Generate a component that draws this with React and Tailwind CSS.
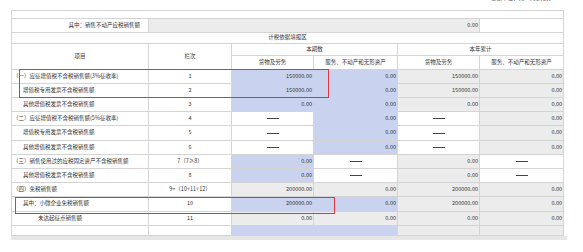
import React from "react";

const B = "bg-[#c9d3ef]";
const G = "bg-[#ececec]";
const W = "bg-white";

const rows = [
  { label: "（一）应征增值税不含税销售额(3%征收率)", indent: 0, lc: "1", h: 14, cells: [[B, "150000.00"], [B, "0.00"], [G, "150000.00"], [G, "0.00"]] },
  { label: "增值税专用发票不含税销售额", indent: 1, lc: "2", h: 14, cells: [[B, "150000.00"], [B, "0.00"], [G, "150000.00"], [G, "0.00"]] },
  { label: "其他增值税发票不含税销售额", indent: 1, lc: "3", h: 14, cells: [[B, "0.00"], [B, "0.00"], [G, "0.00"], [G, "0.00"]] },
  { label: "（二）应征增值税不含税销售额(5%征收率)", indent: 0, lc: "4", h: 14, cells: [[W, "-"], [B, "0.00"], [W, "-"], [G, "0.00"]] },
  { label: "增值税专用发票不含税销售额", indent: 1, lc: "5", h: 15, cells: [[W, "-"], [B, "0.00"], [W, "-"], [G, "0.00"]] },
  { label: "其他增值税发票不含税销售额", indent: 1, lc: "6", h: 14, cells: [[W, "-"], [B, "0.00"], [W, "-"], [G, "0.00"]] },
  { label: "（三）销售使用过的应税固定资产不含税销售额", indent: 0, lc: "7（7≥8）", h: 14, cells: [[B, "0.00"], [W, "-"], [G, "0.00"], [W, "-"]] },
  { label: "其他增值税发票不含税销售额", indent: 1, lc: "8", h: 14, cells: [[B, "0.00"], [W, "-"], [G, "0.00"], [W, "-"]] },
  { label: "（四）免税销售额", indent: 0, lc: "9=（10+11+12）", h: 14, cells: [[G, "200000.00"], [G, "0.00"], [G, "200000.00"], [G, "0.00"]] },
  { label: "其中：小微企业免税销售额", indent: 1, lc: "10", h: 15, cells: [[B, "200000.00"], [B, "0.00"], [G, "200000.00"], [G, "0.00"]] },
  { label: "未达起征点销售额", indent: 2, lc: "11", h: 14, cells: [[G, "0.00"], [G, "0.00"], [G, "0.00"], [G, "0.00"]] },
];

const td = "border border-[#d4d4d4] p-0 leading-none align-middle";

export default function App() {
  return (
    <div className="w-[583px] h-[252px] overflow-hidden bg-white text-[#333] text-[5.5px] font-['Noto_Sans_CJK_SC','Noto_Sans',sans-serif]">
      <div className="h-[10px] flex justify-end pr-[26px]">
        <div className="mt-[-4px] text-[#555] leading-none">金额单位：元（列至角分）</div>
      </div>
      <div className="ml-[11px] w-[556px] relative">
        <table className="table-fixed border-collapse w-[553px]">
          <colgroup>
            <col className="w-[137px]" />
            <col className="w-[83px]" />
            <col className="w-[82px]" />
            <col className="w-[84px]" />
            <col className="w-[82px]" />
            <col className="w-[84px]" />
          </colgroup>
          <tbody>
            <tr className="h-[8px]">
              <td colSpan={6} className={td}></td>
            </tr>
            <tr className="h-[14px]">
              <td className={`${td} text-right pr-[8px]`}>其中：销售不动产应税销售额</td>
              <td colSpan={4} className={`${td} ${G} text-right pr-[1px]`}>0.00</td>
              <td className={td}></td>
            </tr>
            <tr className="h-[11px]">
              <td colSpan={6} className={`${td} text-center`}>计税依据填报区</td>
            </tr>
            <tr className="h-[12px]">
              <td rowSpan={2} className={`${td} text-center`}>项目</td>
              <td rowSpan={2} className={`${td} text-center`}>栏次</td>
              <td colSpan={2} className={`${td} text-center`}>本期数</td>
              <td colSpan={2} className={`${td} text-center`}>本年累计</td>
            </tr>
            <tr className="h-[14px]">
              <td className={`${td} text-center`}>货物及劳务</td>
              <td className={`${td} text-center`}>服务、不动产和无形资产</td>
              <td className={`${td} text-center`}>货物及劳务</td>
              <td className={`${td} text-center`}>服务、不动产和无形资产</td>
            </tr>
            {rows.map((r, i) => (
              <tr key={i} style={{ height: r.h }}>
                <td className={`${td} text-left ${r.indent === 0 ? "pl-[1px]" : r.indent === 1 ? "pl-[11px]" : "pl-[26px]"}`}>{r.label}</td>
                <td className={`${td} text-center`}>{r.lc}</td>
                {r.cells.map(([bg, v], j) => (
                  <td key={j} className={`${td} ${bg} ${v === "-" ? "" : "text-right pr-[1px]"}`}>
                    {v === "-" ? <div className="mx-auto w-[12px] h-px bg-[#444]"></div> : v}
                  </td>
                ))}
              </tr>
            ))}
            <tr className="h-[10px]">
              <td className={td}></td>
              <td className={td}></td>
              <td className={`${td} ${B}`}></td>
              <td className={`${td} ${B}`}></td>
              <td className={`${td} ${G}`}></td>
              <td className={`${td} ${G}`}></td>
            </tr>
          </tbody>
        </table>
        <div className="h-[4px] w-[556px] bg-[#e6e6e6]"></div>
        <div className="absolute left-[8px] top-[59px] w-[310px] h-[29px] border border-[#e0353a] pointer-events-none"></div>
        <div className="absolute left-[4px] top-[187px] w-[320px] h-[17px] border border-[#e0353a] pointer-events-none"></div>
      </div>
    </div>
  );
}
